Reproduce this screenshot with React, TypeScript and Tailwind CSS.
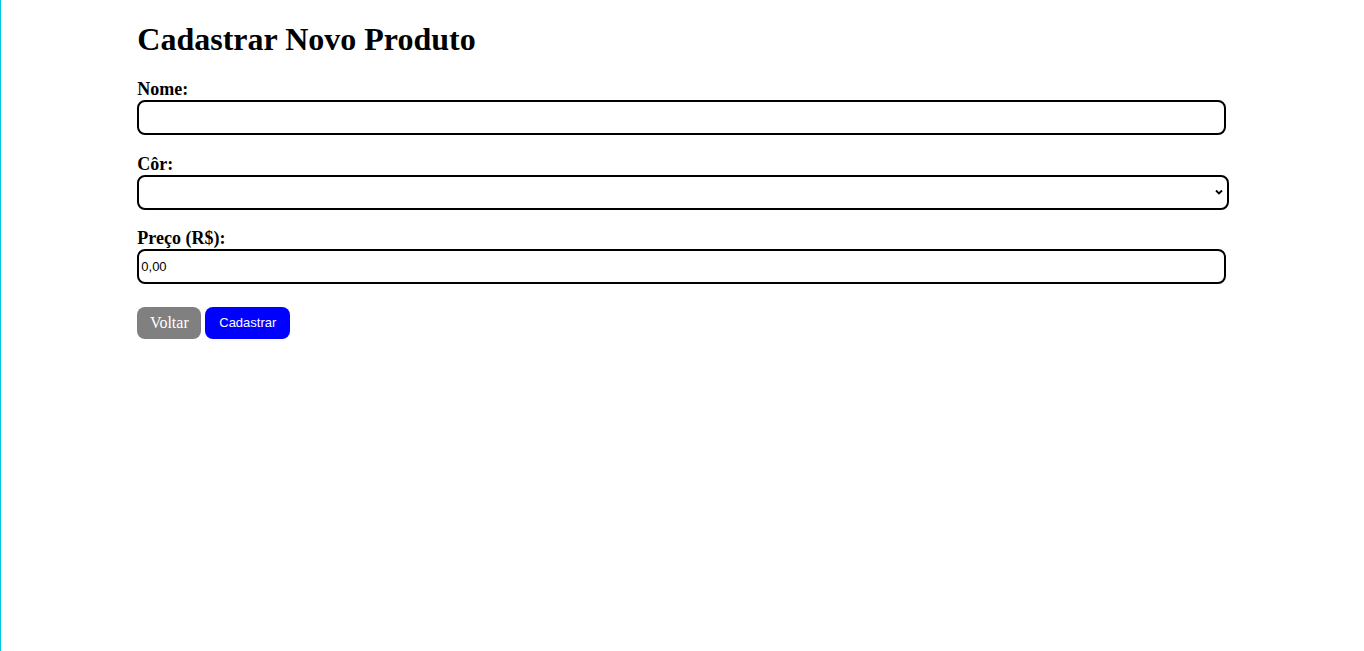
export default function App() {
  return (
    <div className="min-h-[651px] border-l border-[#00c8e0] bg-white font-['Liberation_Serif',serif] text-black">
      <div className="mx-auto w-[80%] pt-[21px]">
        <h1 className="text-[32px] font-bold leading-[37px]">Cadastrar Novo Produto</h1>
        <form className="mt-[21px]" onSubmit={(e) => e.preventDefault()}>
          <div className="mb-[19px]">
            <label className="block text-[18px] font-bold leading-[21px]">Nome:</label>
            <input
              type="text"
              className="block h-[35px] w-[1089px] rounded-[8px] border-2 border-black px-[2px] font-['Liberation_Sans',sans-serif] text-[13px] outline-none"
            />
          </div>
          <div className="mb-[18px]">
            <label className="block text-[18px] font-bold leading-[21px]">Côr:</label>
            <div className="relative h-[35px] w-[1092px] rounded-[8px] border-2 border-black">
              <select className="h-full w-full appearance-none bg-transparent outline-none" />
              <svg
                className="pointer-events-none absolute right-[4px] top-[12px]"
                width="8"
                height="6"
                viewBox="0 0 8 6"
                fill="none"
              >
                <path d="M1 1.5 L4 4.5 L7 1.5" stroke="black" strokeWidth="1.8" />
              </svg>
            </div>
          </div>
          <div className="mb-[23px]">
            <label className="block text-[18px] font-bold leading-[21px]">Preço (R$):</label>
            <input
              type="text"
              defaultValue="0,00"
              className="block h-[35px] w-[1089px] rounded-[8px] border-2 border-black px-[2px] font-['Liberation_Sans',sans-serif] text-[13px] outline-none"
            />
          </div>
          <div className="flex gap-[4px]">
            <button
              type="button"
              className="h-[32px] w-[64px] rounded-[8px] bg-[#808080] text-[16px] text-white"
            >
              Voltar
            </button>
            <button
              type="submit"
              className="h-[32px] w-[85px] rounded-[8px] bg-[#0000ff] font-['Liberation_Sans',sans-serif] text-[13px] text-white"
            >
              Cadastrar
            </button>
          </div>
        </form>
      </div>
    </div>
  );
}
